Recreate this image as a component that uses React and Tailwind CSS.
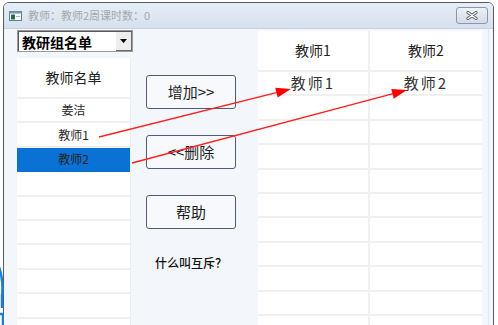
import React from "react";

const cjk = { fontFamily: '"Noto Sans CJK SC", "Noto Sans", sans-serif' };

function arrowHead(x1, y1, x2, y2, len = 15, half = 5) {
  const dx = x2 - x1;
  const dy = y2 - y1;
  const l = Math.hypot(dx, dy);
  const ux = dx / l;
  const uy = dy / l;
  const bx = x2 - ux * len;
  const by = y2 - uy * len;
  const nx = -uy;
  const ny = ux;
  return `${x2},${y2} ${bx + nx * half},${by + ny * half} ${bx - nx * half},${by - ny * half}`;
}

function Arrows() {
  const lines = [
    [99, 137, 291, 89],
    [132, 163, 407, 90],
  ];
  return (
    <svg className="absolute left-0 top-0 pointer-events-none" width="498" height="325">
      {lines.map(([a, b, c, d], i) => (
        <g key={i}>
          <line x1={a} y1={b} x2={c - (c - a) * 0.05} y2={d - (d - b) * 0.05} stroke="#ff1f1f" strokeWidth="1.3" />
          <polygon points={arrowHead(a, b, c, d)} fill="#ff0000" />
        </g>
      ))}
    </svg>
  );
}

function Btn({ children }) {
  return (
    <div className="w-[90px] h-[34px] shrink-0 rounded-[3px] border border-[#4f5b78] bg-[#f7f9fd] flex items-center justify-center text-[15px] text-[#1e1e1e]">
      {children}
    </div>
  );
}

export default function App() {
  const leftRows = ["姜洁", "教师1", "教师2", "", "", "", "", "", "", ""];
  const tableRows = [["教师1", "教师2"], ...Array.from({ length: 10 }, () => ["", ""])];
  return (
    <div className="relative w-[498px] h-[325px] overflow-hidden bg-white" style={cjk}>
      {/* desktop behind window */}
      <svg className="absolute left-0 top-[262px]" width="4" height="63">
        <path d="M-2 2 Q 4 18 2 34 L 2 46 M -2 52 L 3 52 L 3 63" stroke="#1b7fd6" strokeWidth="2.5" fill="none" />
      </svg>

      <div className="ml-[3px] mt-[2px] w-[491px] h-[340px] border border-[#555b63] rounded-t-[6px] flex flex-col overflow-hidden">
        {/* title bar */}
        <div className="h-[25px] shrink-0 flex items-center bg-gradient-to-b from-[#e6edf6] to-[#d6e1ee] pl-[5px] pr-[4px]">
          <svg width="13" height="10" viewBox="0 0 13 10" className="shrink-0">
            <rect x="0.5" y="0.5" width="12" height="9" fill="#ffffff" stroke="#5a7fa8" />
            <rect x="0.5" y="0.5" width="12" height="2" fill="#6f93bd" />
            <rect x="2" y="3.5" width="4" height="5" fill="#2f6a3d" />
            <rect x="7" y="5" width="4" height="1" fill="#9bb" />
          </svg>
          <span className="ml-[6px] text-[11px] text-[#a3a8ae] leading-none">教师：教师2周课时数：0</span>
          <div className="ml-auto mr-[1px] w-[32px] h-[17px] rounded-[3px] border border-[#8d97a8] bg-gradient-to-b from-[#eef2f7] to-[#d3dbe6] flex items-center justify-center">
            <svg width="12" height="9" viewBox="0 0 12 9">
              <path d="M2 1.5 L10 7.5 M10 1.5 L2 7.5" stroke="#5f6670" strokeWidth="3.2" strokeLinecap="round" />
              <path d="M2 1.5 L10 7.5 M10 1.5 L2 7.5" stroke="#ffffff" strokeWidth="1.3" strokeLinecap="round" />
            </svg>
          </div>
        </div>

        {/* client area */}
        <div className="flex-1 flex bg-[#f3f7fc] pl-[13px] border-t border-[#c9d3df]">
          {/* left column */}
          <div className="w-[114px] shrink-0 flex flex-col">
            <div className="relative z-10 mt-[1px] w-[116px] h-[22px] border border-[#9a9a9a] bg-white flex">
              <div className="flex-1 border-t border-l border-[#5a5a5a] flex items-center pl-[3px] text-[14px] font-bold text-black leading-none">
                教研组名单
              </div>
              <div className="w-[16px] border-t border-[#5a5a5a] bg-[#eeeeee] border-r border-b border-r-[#6a6a6a] border-b-[#6a6a6a] flex items-center justify-center">
                <svg width="7" height="4" viewBox="0 0 7 4"><path d="M0 0 L7 0 L3.5 4 Z" fill="#000" /></svg>
              </div>
            </div>
            <div className="mt-[6px] bg-white border-r border-[#ebeef3]">
              <div className="h-[41px] flex items-center justify-center text-[14px] text-[#222] border-b-2 border-[#f0f0f0]">
                教师名单
              </div>
              {leftRows.map((t, i) => (
                <div
                  key={i}
                  className={`h-[24.4px] flex items-center justify-center text-[12px] text-[#2a1f1f] border-b-2 ${i === 2 ? "bg-[#0a72d4] border-[#0a72d4]" : "border-[#f0f0f0]"}`}
                >
                  {t}
                </div>
              ))}
            </div>
          </div>

          {/* middle column */}
          <div className="w-[127px] shrink-0 flex flex-col items-start pl-[15px] pt-[46px] gap-[26px]">
            <Btn>增加&gt;&gt;</Btn>
            <Btn>&lt;&lt;删除</Btn>
            <Btn>帮助</Btn>
            <div className="w-[90px] text-center text-[12px] font-medium text-[#111] leading-4">什么叫互斥？</div>
          </div>

          {/* right table */}
          <div className="w-[224px] shrink-0 mt-[2px] bg-white">
            {[["教师1", "教师2"]].map((r, i) => (
              <div key={"h" + i} className="flex h-[41px] border-b-2 border-[#f0f0f0]">
                <div className="w-[112px] border-r-2 border-[#f0f0f0] flex items-center justify-center text-[14px] text-[#222]">{r[0]}</div>
                <div className="w-[112px] flex items-center justify-center text-[14px] text-[#222]">{r[1]}</div>
              </div>
            ))}
            {tableRows.map((r, i) => (
              <div key={i} className="flex h-[24.4px] border-b-2 border-[#f0f0f0]">
                <div className="w-[112px] border-r-2 border-[#f0f0f0] flex items-center justify-center text-[15px] tracking-[2px] text-[#333]">{r[0]}</div>
                <div className="w-[112px] flex items-center justify-center text-[15px] tracking-[2px] text-[#333]">{r[1]}</div>
              </div>
            ))}
          </div>

          {/* right strip */}
          <div className="flex-1 flex">
            <div className="ml-[6px] w-px bg-[#dfe6f1]" />
          </div>
        </div>
      </div>

      <Arrows />
    </div>
  );
}
